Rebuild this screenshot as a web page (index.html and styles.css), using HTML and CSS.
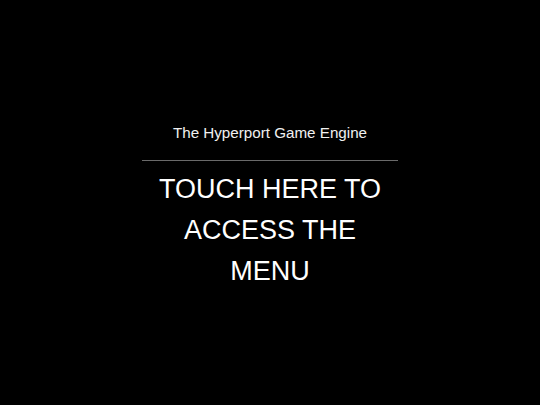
FILE: index.html
```html
<!DOCTYPE html>
<html>
<head>
<meta charset="utf-8">
<link rel="stylesheet" href="styles.css">
</head>
<body>
<div class="screen">
  <div class="panel">
    <div class="title">The Hyperport Game Engine</div>
    <div class="rule"></div>
    <div class="touch">TOUCH HERE TO ACCESS THE MENU</div>
  </div>
</div>
</body>
</html>
```
FILE: styles.css
```css
html, body {
  margin: 0;
  padding: 0;
  background: #000;
}
.screen {
  width: 540px;
  height: 405px;
  display: flex;
  justify-content: center;
  align-items: flex-start;
  font-family: "Liberation Sans", Arial, sans-serif;
  color: #fff;
}
.panel {
  width: 256px;
  margin-top: 123px;
  display: flex;
  flex-direction: column;
  align-items: center;
  text-align: center;
}
.title {
  font-size: 15.2px;
  line-height: 20px;
  color: #f0f0f0;
}
.rule {
  width: 256px;
  height: 1px;
  background: #6a6a6a;
  margin-top: 17px;
}
.touch {
  width: 240px;
  margin-top: 8px;
  font-size: 27px;
  line-height: 41px;
}
```
